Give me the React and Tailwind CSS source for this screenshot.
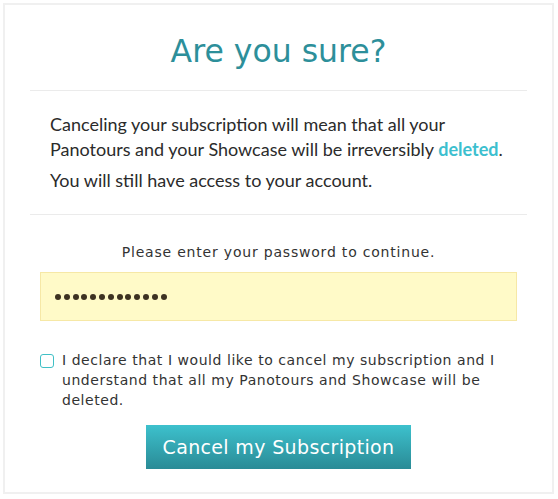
import React, { useState } from 'react'

const mont = { fontFamily: '"DejaVu Sans", "Noto Sans", sans-serif' }

export default function App() {
  const [checked, setChecked] = useState(false)
  return (
    <div className="w-[558px] h-[499px] bg-white pt-[3px] pl-[3px]">
      <div className="w-[551px] h-[491px] border-2 border-[#f0f0f0] bg-white px-[25px]">
        <h1
          className="pt-[28px] text-center text-[31.5px] leading-[36px] text-[#2d8f9a] mb-[21px]"
          style={mont}
        >
          Are you sure?
        </h1>
        <div className="h-px bg-[#ebebeb]" />

        <div
          className="pt-[21px] pb-[21px] px-5 text-[18px] leading-[25px] text-[#2b2b2b]"
          style={{ fontFamily: 'Lato, "Open Sans", sans-serif' }}
        >
          <p>
            Canceling your subscription will mean that all your Panotours and your Showcase will
            be irreversibly <span className="font-bold text-[#3dbfcf]">deleted</span>.
          </p>
          <p className="mt-[6px]">You will still have access to your account.</p>
        </div>
        <div className="h-px bg-[#ebebeb]" />

        <p
          className="pt-[27px] text-center text-[14px] leading-5 text-[#333] tracking-[0.8px]"
          style={mont}
        >
          Please enter your password to continue.
        </p>
        <div className="mx-[10px] mt-[10px] h-[49px] bg-[#fffac8] border border-[#f6e8a6] flex items-center pl-[14px] gap-[2.8px]">
          {Array.from({ length: 13 }).map((_, i) => (
            <span key={i} className="w-[6px] h-[6px] rounded-full bg-[#3d3222]" />
          ))}
        </div>

        <label className="mt-[29px] flex items-start gap-[8px] pl-[10px] pr-[20px] cursor-pointer">
          <span
            onClick={() => setChecked(!checked)}
            className="mt-[4px] shrink-0 w-[14px] h-[14px] rounded-[3px] border border-[#40c0c6] bg-white flex items-center justify-center"
          >
            {checked && <span className="w-[8px] h-[8px] bg-[#40c0c6] rounded-[1px]" />}
          </span>
          <span className="text-[14px] leading-5 text-[#333] tracking-[0.55px]" style={mont}>
            I declare that I would like to cancel my subscription and I understand that all my
            Panotours and Showcase will be deleted.
          </span>
        </label>

        <div className="mt-[15px] flex justify-center">
          <button
            className="w-[265px] h-[44px] flex items-center justify-center text-white text-[19px] tracking-[0.35px] bg-gradient-to-b from-[#3dc1cd] to-[#2a8b96]"
            style={mont}
          >
            Cancel my Subscription
          </button>
        </div>
      </div>
    </div>
  )
}
